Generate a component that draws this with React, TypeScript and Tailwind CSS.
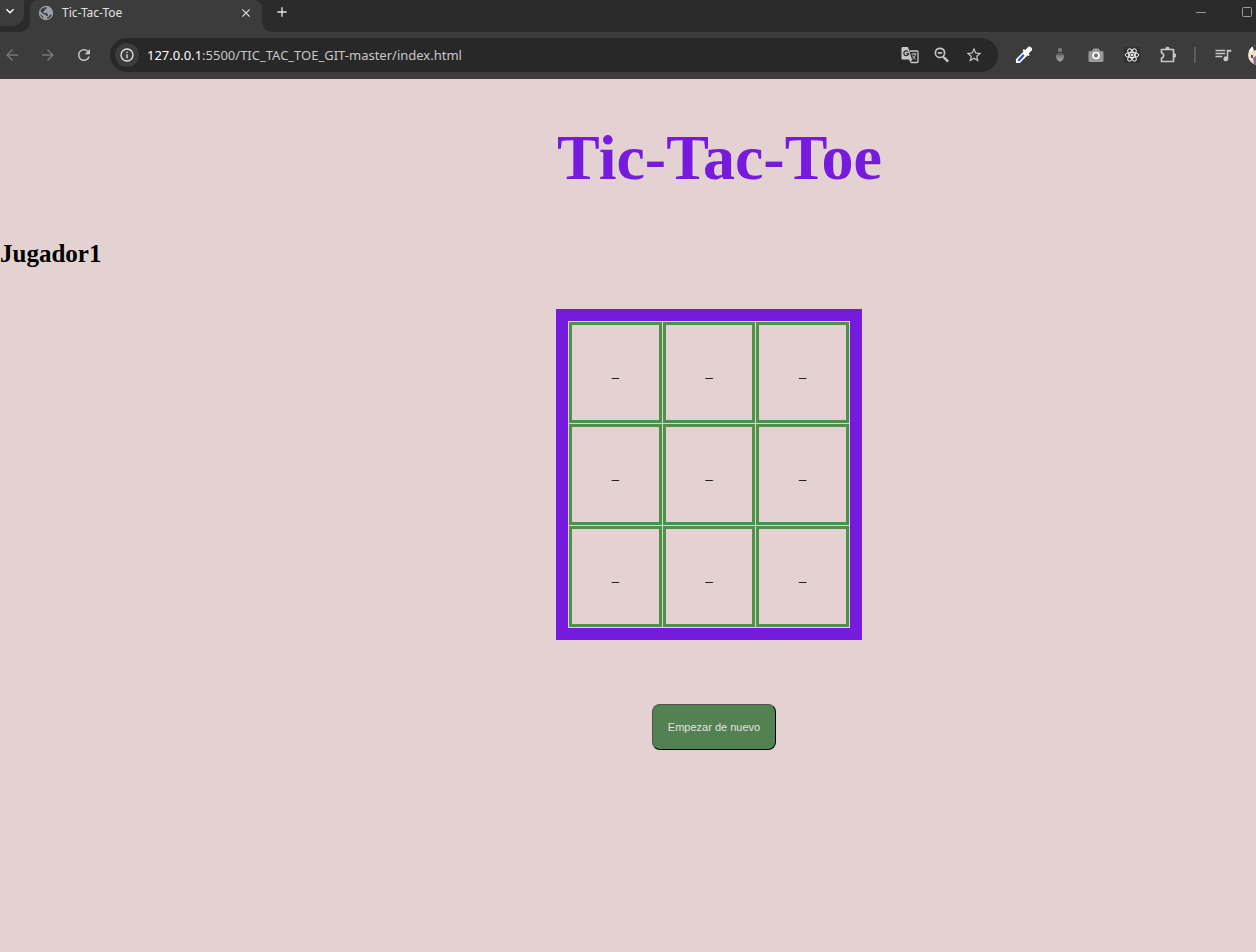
import { useState } from "react";
import type { ReactNode } from "react";

const MATERIAL = {
  chevron: "M7.41 8.59 12 13.17l4.59-4.58L18 10l-6 6-6-6z",
  close: "M19 6.41 17.59 5 12 10.59 6.41 5 5 6.41 10.59 12 5 17.59 6.41 19 12 13.41 17.59 19 19 17.59 13.41 12z",
  plus: "M19 13h-6v6h-2v-6H5v-2h6V5h2v6h6z",
  back: "M20 11H7.83l5.59-5.59L12 4l-8 8 8 8 1.41-1.41L7.83 13H20z",
  forward: "m12 4-1.41 1.41L16.17 11H4v2h12.17l-5.58 5.59L12 20l8-8z",
  reload:
    "M17.65 6.35A7.96 7.96 0 0 0 12 4a8 8 0 1 0 7.73 10h-2.08A6 6 0 1 1 12 6c1.66 0 3.14.69 4.22 1.78L13 11h7V4z",
  info: "M11 7h2v2h-2zm0 4h2v6h-2zm1-9a10 10 0 1 0 0 20 10 10 0 0 0 0-20m0 18a8 8 0 1 1 0-16 8 8 0 0 1 0 16",
  zoomOut:
    "M15.5 14h-.79l-.28-.27A6.5 6.5 0 1 0 13 14.91l.27.28v.79l5 4.99L20.49 19zm-6 0a4.5 4.5 0 1 1 0-9 4.5 4.5 0 0 1 0 9M7 8.5h5v2H7z",
  star: "m22 9.24-7.19-.62L12 2 9.19 8.63 2 9.24l5.46 4.73L5.82 21 12 17.27 18.18 21l-1.63-7.03zM12 15.4l-3.76 2.27 1-4.28-3.32-2.88 4.38-.38L12 6.1l1.71 4.04 4.38.38-3.32 2.88 1 4.28z",
  queue: "M15 5H2v2h13zm0 4H2v2h13zM2 13v2h9v-2zM17 5v9.18a3.2 3.2 0 1 0 2 3V7.500h4V5z",
};

function Glyph({ d, className }: { d: string; className: string }) {
  return (
    <svg viewBox="0 0 24 24" fill="currentColor" className={className} aria-hidden="true">
      <path d={d} />
    </svg>
  );
}

function IconButton({ label, className = "", children }: { label: string; className?: string; children: ReactNode }) {
  return (
    <button type="button" aria-label={label} className={`flex shrink-0 items-center justify-center ${className}`}>
      {children}
    </button>
  );
}

function Globe() {
  return (
    <svg viewBox="0 0 16 16" className="size-4 shrink-0" aria-hidden="true">
      <circle cx="8" cy="8" r="7.2" fill="#9aa0a6" />
      <path
        d="M8.600 2.200 8.400 3.900 6.800 4.300l.2 1.300-1.700.8.300 1.500h3.300l.9 1.500v1.500H8.400l-1.200-1.500-2-.5-2.900-2.800A6 6 0 0 1 8.600 2.200M9.300 12.100l1.800-.5.400-1.600 2.300-.4a6 6 0 0 1-4.500 4.200zM2 8.800l3 2.600.4 1.900A6.200 6.200 0 0 1 2 8.800"
        fill="#3c3c3c"
      />
    </svg>
  );
}

function Translate() {
  return (
    <svg viewBox="0 0 18 18" className="size-[18px]" fill="none" aria-hidden="true">
      <path d="M8.500 5h7.500a1 1 0 0 1 1 1v9.500a1 1 0 0 1-1 1H10" stroke="#c7c7c7" strokeWidth="1.300" />
      <path d="M1.500 1H7l4 12.500H1.500a1 1 0 0 1-1-1V2a1 1 0 0 1 1-1M8 13.500h3L9.500 17z" fill="#c7c7c7" />
      <path d="M7 5.700a2.400 2.400 0 1 0 .6 1.900H5.400" stroke="#282828" strokeWidth="1.200" />
      <path
        d="M10.500 8h5M13 6.800V8m1.500 0c-.4 2.300-1.500 3.900-3.200 5.200M11.300 9.500c.8 1.600 2 2.700 3.500 3.800"
        stroke="#c7c7c7"
        strokeWidth="1"
      />
    </svg>
  );
}

function Dropper() {
  return (
    <svg viewBox="0 0 18 18" className="size-[18px]" aria-hidden="true">
      <path d="M1.500 16.500v-3L9 6l3 3-7.500 7.500z" fill="#fff" stroke="#fff" strokeWidth="1.200" strokeLinejoin="round" />
      <path d="m3.300 14.700 5.500-5.900" stroke="#2f4bd0" strokeWidth="2.300" />
      <path
        d="m7.500 4.500 1.500-1.500 1.300 1.200 2.300-2.700a2.500 2.500 0 0 1 3.700 3.600l-2.700 2.300 1.200 1.400-1.500 1.500z"
        fill="#fff"
      />
    </svg>
  );
}

function Acorn() {
  return (
    <svg viewBox="0 0 16 16" className="size-4" aria-hidden="true">
      <defs>
        <linearGradient id="acorn" x1="0" y1="0" x2="0" y2="1">
          <stop offset="0" stopColor="#727272" />
          <stop offset="1" stopColor="#a8a8a8" />
        </linearGradient>
      </defs>
      <circle cx="8" cy="3" r="2.200" fill="#777" />
      <path d="M4 7.500C4.500 5.500 11.500 5.500 12 7.500z" fill="#686868" />
      <path d="M4 7.800h8c.6 3.200-1.300 6.200-4 6.700-2.700-.5-4.600-3.500-4-6.700" fill="url(#acorn)" />
    </svg>
  );
}

function Camera() {
  return (
    <svg viewBox="0 0 16 14" className="h-[14px] w-4" aria-hidden="true">
      <path
        d="M2 3h2l1.500-2.500h5L12 3h2a1.500 1.500 0 0 1 1.500 1.500v8A1.500 1.500 0 0 1 14 14H2a1.500 1.500 0 0 1-1.500-1.500v-8A1.500 1.500 0 0 1 2 3"
        fill="#9a9a9a"
      />
      <circle cx="8" cy="7.500" r="3" fill="#777" stroke="#fff" strokeWidth="1.700" />
    </svg>
  );
}

function Atom() {
  return (
    <svg viewBox="0 0 16 16" className="size-4 bg-[#303030]" fill="none" stroke="#f0f0f0" aria-hidden="true">
      <ellipse cx="8" cy="8" rx="6.800" ry="2.600" />
      <ellipse cx="8" cy="8" rx="6.800" ry="2.600" transform="rotate(60 8 8)" />
      <ellipse cx="8" cy="8" rx="6.800" ry="2.600" transform="rotate(120 8 8)" />
      <circle cx="8" cy="8" r="1" fill="#fff" />
    </svg>
  );
}

function Puzzle() {
  return (
    <svg viewBox="0 0 18 18" className="size-[18px]" aria-hidden="true">
      <path
        d="M1.500 3.500h12v12h-12V12c2.800-.3 2.800-4.700 0-5z"
        fill="none"
        stroke="#c7c7c7"
        strokeWidth="1.700"
        strokeLinejoin="round"
      />
      <path d="M5.300 3a2.200 2.200 0 0 1 4.400 0zM14 7.300a2.200 2.200 0 0 1 0 4.400z" fill="#c7c7c7" />
    </svg>
  );
}

function Avatar() {
  return (
    <svg viewBox="0 0 20 20" className="size-5 rounded-full" aria-hidden="true">
      <rect width="20" height="20" fill="#f2dfc9" />
      <path d="M5 0h15v5l-9 3-3-3-3 1z" fill="#29434a" />
      <path d="M0 4 4 1l2 4-4 4z" fill="#fff4df" />
      <path d="M3 10h2v3H3z" fill="#57506d" />
      <path d="m5 13 4-3 8 4-3 6H6z" fill="#8b6a91" />
    </svg>
  );
}

function TabStrip() {
  return (
    <div className="flex h-8 items-end overflow-hidden bg-[#2b2b2b]">
      <div className="flex h-8 w-[30px] shrink-0 items-start">
        <IconButton label="Buscar pestañas" className="h-[26px] w-6 rounded-br-xl bg-[#3c3c3c] pr-1 pb-1 text-white">
          <Glyph d={MATERIAL.chevron} className="size-4" />
        </IconButton>
      </div>
      <div className="relative flex h-8 w-[232px] shrink-0 items-center rounded-t-lg bg-[#3c3c3c] px-2 pb-[7px] text-[#e3e3e3]">
        <svg viewBox="0 0 10 10" className="absolute bottom-0 -left-[10px] size-[10px]" fill="#3c3c3c" aria-hidden="true">
          <path d="M10 0v10H0A10 10 0 0 0 10 0" />
        </svg>
        <svg viewBox="0 0 10 10" className="absolute -right-[10px] bottom-0 size-[10px]" fill="#3c3c3c" aria-hidden="true">
          <path d="M0 0v10h10A10 10 0 0 1 0 0" />
        </svg>
        <Globe />
        <span className="ml-2 flex-1 text-[12px] leading-4">Tic-Tac-Toe</span>
        <IconButton label="Cerrar pestaña" className="size-4">
          <Glyph d={MATERIAL.close} className="size-[14px]" />
        </IconButton>
      </div>
      <IconButton label="Nueva pestaña" className="mb-3 ml-3 size-4 text-[#e3e3e3]">
        <Glyph d={MATERIAL.plus} className="size-[18px]" />
      </IconButton>
      <div className="mr-1 mb-[15px] ml-auto flex items-center gap-9 text-[#9b9b9b]">
        <IconButton label="Minimizar">
          <svg viewBox="0 0 10 10" className="size-[10px]" stroke="currentColor" aria-hidden="true">
            <path d="M0 5.500h10" />
          </svg>
        </IconButton>
        <IconButton label="Maximizar">
          <svg viewBox="0 0 10 10" className="size-[10px]" fill="none" stroke="currentColor" aria-hidden="true">
            <rect x=".5" y=".5" width="9" height="9" rx="1" />
          </svg>
        </IconButton>
      </div>
    </div>
  );
}

function Toolbar() {
  return (
    <div className="flex h-[47px] items-center overflow-hidden bg-[#3c3c3c] pb-px text-[#c7c7c7]">
      <div className="flex shrink-0 items-center gap-[18px] pl-[3px]">
        <IconButton label="Atrás" className="size-[18px] text-[#757575]">
          <Glyph d={MATERIAL.back} className="size-[18px]" />
        </IconButton>
        <IconButton label="Adelante" className="size-[18px] text-[#757575]">
          <Glyph d={MATERIAL.forward} className="size-[18px]" />
        </IconButton>
        <IconButton label="Recargar" className="size-[18px]">
          <Glyph d={MATERIAL.reload} className="size-[18px]" />
        </IconButton>
      </div>
      <div className="ml-[17px] flex h-[34px] min-w-0 flex-1 items-center rounded-full bg-[#282828] pr-[15px] pl-[5px]">
        <IconButton label="Información del sitio" className="size-6 rounded-full bg-[#3c3c3c] text-[#e3e3e3]">
          <Glyph d={MATERIAL.info} className="size-4" />
        </IconButton>
        <p className="ml-2 min-w-0 flex-1 truncate text-[13px] leading-5">
          <span className="text-white">127.0.0.1</span>:5500/TIC_TAC_TOE_GIT-master/index.html
        </p>
        <div className="flex shrink-0 items-center gap-[13px]">
          <IconButton label="Traducir esta página">
            <Translate />
          </IconButton>
          <IconButton label="Zoom">
            <Glyph d={MATERIAL.zoomOut} className="size-5" />
          </IconButton>
          <IconButton label="Añadir a marcadores">
            <Glyph d={MATERIAL.star} className="size-[18px]" />
          </IconButton>
        </div>
      </div>
      <div className="-mr-3 ml-[17px] flex shrink-0 items-center">
        <IconButton label="Cuentagotas">
          <Dropper />
        </IconButton>
        <IconButton label="Extensión" className="ml-[19px]">
          <Acorn />
        </IconButton>
        <IconButton label="Captura" className="ml-5">
          <Camera />
        </IconButton>
        <IconButton label="React" className="ml-5">
          <Atom />
        </IconButton>
        <IconButton label="Extensiones" className="ml-5">
          <Puzzle />
        </IconButton>
        <span className="ml-4 h-4 w-[2px] bg-[#5c5c5c]" />
        <IconButton label="Controles multimedia" className="ml-[18px]">
          <Glyph d={MATERIAL.queue} className="size-[18px]" />
        </IconButton>
        <IconButton label="Perfil" className="ml-4">
          <Avatar />
        </IconButton>
      </div>
    </div>
  );
}

const EMPTY_BOARD = Array<string>(9).fill("_");

export default function App() {
  const [cells, setCells] = useState(EMPTY_BOARD);
  const turn = cells.filter((cell) => cell !== "_").length % 2;

  const play = (index: number) =>
    setCells(cells.map((cell, i) => (i === index && cell === "_" ? (turn ? "O" : "X") : cell)));

  return (
    <div className="flex min-h-screen flex-col bg-[#e3d2d1]">
      <header className="font-['Noto_Sans',sans-serif]">
        <TabStrip />
        <Toolbar />
      </header>
      <main className="flex flex-1 flex-col pt-[42px] font-['Liberation_Serif',serif] text-black">
        <h1 className="pl-[183px] text-center text-[64px] leading-[74px] font-bold text-[#761ade]">Tic-Tac-Toe</h1>
        <h2 className="mt-11 text-[25px] leading-[30px] font-bold">Jugador{turn + 1}</h2>
        <div className="mt-10 flex justify-center pl-[162px]">
          <div className="border-[12px] border-[#761ade]">
            <div className="grid h-[307px] w-[282px] grid-cols-3 grid-rows-3 gap-px p-px">
              {cells.map((cell, index) => (
                <button
                  key={index}
                  type="button"
                  aria-label={`Casilla ${index + 1}`}
                  onClick={() => play(index)}
                  className="border-[3px] border-[#4b9349] pb-0.5 font-['Liberation_Sans',sans-serif] text-[13px] leading-4"
                >
                  {cell}
                </button>
              ))}
            </div>
          </div>
        </div>
        <div className="mt-16 flex justify-center pl-[172px]">
          <button
            type="button"
            onClick={() => setCells(EMPTY_BOARD)}
            className="h-[46px] rounded-lg border border-t-[#505050] border-r-black border-b-black border-l-[#505050] bg-[#528252] px-[15px] font-['Liberation_Sans',sans-serif] text-[11px] text-[#e8e0e0]"
          >
            Empezar de nuevo
          </button>
        </div>
      </main>
    </div>
  );
}
